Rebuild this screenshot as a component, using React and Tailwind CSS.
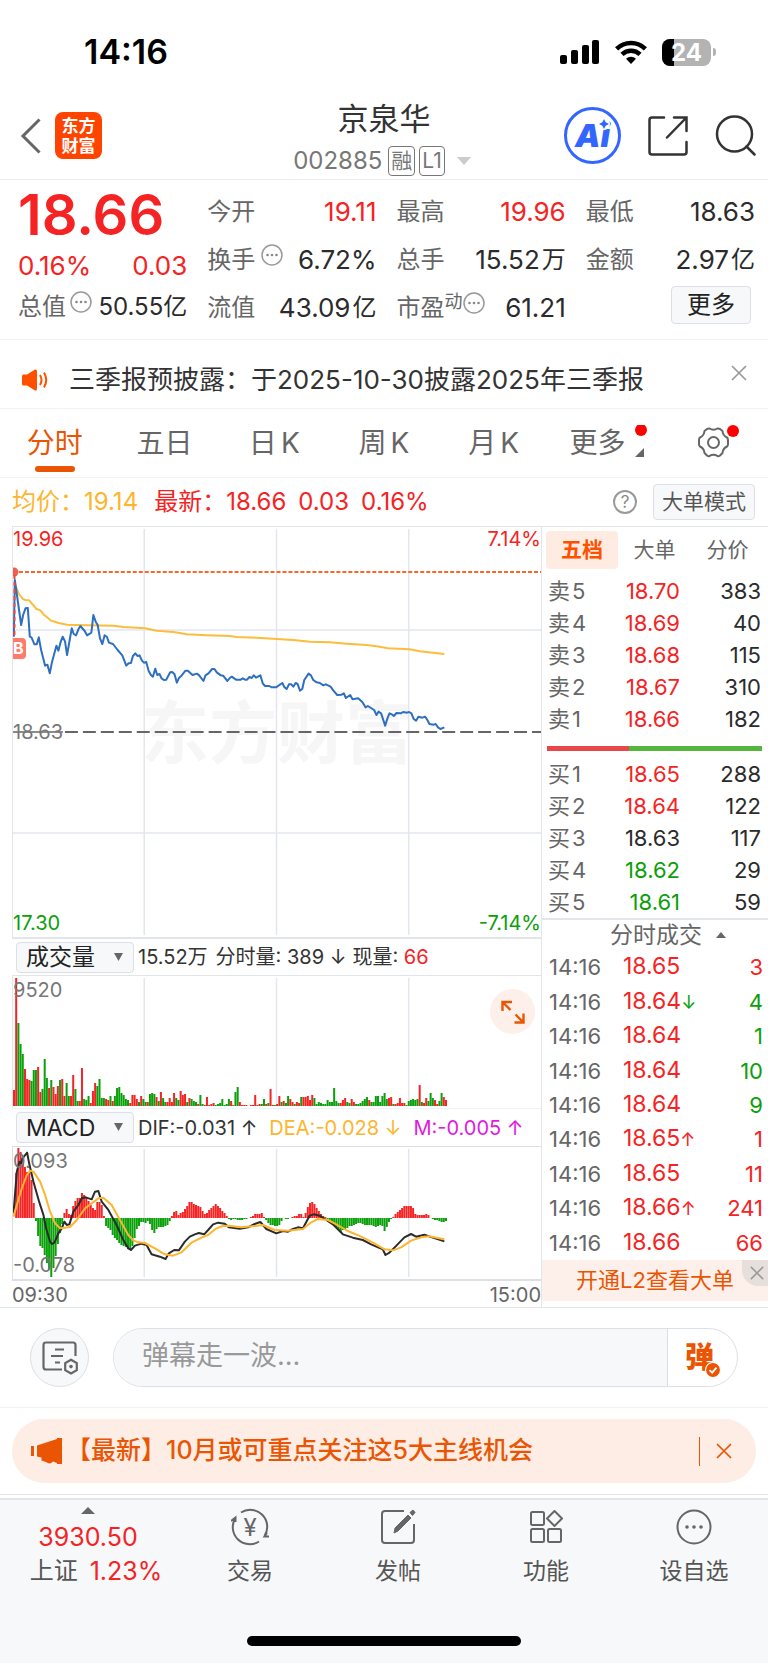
import { clsx } from "clsx";

const RED = "#f52323";
const GREEN = "#0aa00a";

const sells = [
  ["卖5", "18.70", 383, "r"],
  ["卖4", "18.69", 40, "r"],
  ["卖3", "18.68", 115, "r"],
  ["卖2", "18.67", 310, "r"],
  ["卖1", "18.66", 182, "r"],
];

const buys = [
  ["买1", "18.65", 288, "r"],
  ["买2", "18.64", 122, "r"],
  ["买3", "18.63", 117, "k"],
  ["买4", "18.62", 29, "g"],
  ["买5", "18.61", 59, "g"],
];

const ticks = [
  ["18.65", "", 3, "r"],
  ["18.64", "↓", 4, "g"],
  ["18.64", "", 1, "g"],
  ["18.64", "", 10, "g"],
  ["18.64", "", 9, "g"],
  ["18.65", "↑", 1, "r"],
  ["18.65", "", 11, "r"],
  ["18.66", "↑", 241, "r"],
  ["18.66", "", 66, "r"],
];

const textColor = { r: "text-[#f52323]", g: "text-[#0aa00a]", k: "text-[#2b2b2b]" };

// one entry per minute: r = up, g = down, then the bar height
const volume =
  "r16 r128 g83 g62 g52 r37 r27 r26 g25 g36 g36 r39 r14 g17 g47 g28 r18 g26 r19 r12 r20 g26 r27 r10 g23 g10 r10 r31 g17 g5 r5 r38 g7 g6 g10 r3 r15 r23 g20 g27 g8 g8 r7 r6 g10 r5 g10 g18 g19 g13 g11 g7 g6 r3 r11 r11 r7 g4 r10 g7 g4 r4 g12 g13 g12 r9 g5 r14 g8 g4 r4 r8 r4 r13 g8 g6 r15 r11 r12 g4 r8 g7 g5 g4 r2 g11 g2 r1 r9 r1 r2 r3 g1 g2 g3 g7 g1 g2 g7 r5 r1 g14 g19 r4 r1 r1 r1 g0 r1 r1 r11 r1 r2 g2 g7 r2 g3 r17 r1 g1 r2 r10 g4 r5 g3 g10 r7 r4 g2 r4 r3 g9 r9 r9 r10 r6 r11 g8 g2 g4 g3 g2 g2 g6 g4 g4 g18 g5 g3 r3 r6 r8 g4 g3 r7 r4 g2 g2 g3 g5 g7 g9 r6 g4 g4 g10 g10 g4 g10 g13 g7 r8 r9 g2 r2 r3 r8 r3 r3 g1 g5 g6 g7 g6 g7 r21 g4 r3 r8 g5 g13 g8 r6 r2 g5 g13 r9 r6".split(
    " "
  );

const macd = [
  0, 45, 70, 66, 58, 51, 46, 45, 38, 15, -3, -18, -28, -30, -37, -45, -52, -59, -50, -38, -26, -15, -6, 5, 9, 4, 3, 12,
  17, 20, 20, 25, 23, 20, 17, 13, 10, 8, 16, 16, 13, 2, -8, -10, -12, -17, -20, -22, -25, -27, -28, -29, -31, -32, -28,
  -20, -11, -8, -4, -4, -5, -3, -6, -12, -15, -11, -9, -9, -9, -8, -7, -3, 2, 6, 7, 3, 5, 6, 9, 12, 16, 16, 14, 13, 12,
  11, 7, 4, 5, 8, 10, 12, 14, 12, 10, 7, 5, 2, -1, -2, -1, -1, -2, -2, -2, -1, -1, 0, 1, 2, 4, 4, 4, 5, 1, -2, -5, -7,
  -7, -8, -8, -7, -3, 0, -1, -1, 0, 1, 2, 2, 4, 4, 1, 5, 11, 15, 16, 14, 10, 7, 4, 2, 1, -1, -3, -5, -8, -10, -12, -14,
  -12, -11, -10, -8, -8, -7, -6, -5, -5, -6, -7, -7, -7, -7, -8, -9, -8, -7, -8, -13, -9, -4, -1, 1, 4, 6, 8, 10, 12,
  12, 12, 12, 10, 4, 3, 3, 3, 3, 4, 3, 0, -1, -2, -2, -3, -4, -4, -3,
];

const priceLine =
  "40,350 43,180 62,315 68,285 75,265 82,264 88,350 93,352 102,373 109,373 115,352 122,390 134,437 141,434 148,460 155,425 168,377 174,392 180,368 187,350 194,365 200,405 214,325 220,342 227,346 234,328 240,318 253,333 260,346 273,338 279,285 286,305 292,315 299,355 306,372 313,346 320,351 326,368 338,372 352,390 366,406 378,437 385,430 392,429 398,408 405,400 412,408 418,406 425,422 431,428 438,426 445,452 452,465 458,470 465,446 471,465 478,462 484,475 491,480 498,479 510,457 516,456 523,463 530,488 537,473 544,467 556,452 563,452 577,465 590,461 597,466 610,483 616,466 625,460 636,447 643,447 650,457 662,466 669,467 682,483 689,474 695,470 708,479 722,479 728,475 735,479 741,479 748,471 755,474 761,466 768,473 781,466 788,490 795,498 808,498 815,502 828,502 847,489 853,501 860,507 867,493 874,493 880,500 887,489 893,492 900,512 907,507 913,480 926,461 933,466 940,480 950,487 960,489 970,496 978,493 992,500 1000,511 1012,525 1025,524 1032,520 1038,534 1051,525 1058,538 1075,535 1088,547 1097,562 1104,558 1123,570 1130,585 1136,575 1144,580 1156,617 1163,595 1169,580 1176,583 1182,588 1190,579 1203,580 1210,576 1222,578 1228,576 1235,580 1242,597 1249,602 1256,590 1268,593 1276,590 1283,600 1289,612 1302,614 1308,612 1315,622 1322,627 1334,622";

const avgLine =
  "44,195 55,222 67,237 75,240 86,241 98,255 108,267 120,271 130,284 140,292 152,302 175,309 200,314 260,316 340,317 370,321 435,325 470,332 520,336 560,343 620,346 690,348 710,351 770,353 830,357 880,360 930,365 990,367 1040,371 1100,375 1130,379 1165,385 1230,388 1260,394 1334,402";

const difLine =
  "15,715 25,590 33,560 38,565 42,550 56,533 62,565 75,620 92,680 105,720 113,760 125,800 131,807 138,803 150,775 160,760 168,740 175,750 183,748 195,710 210,690 220,670 232,667 250,673 260,650 270,648 280,680 300,705 325,750 345,795 360,820 368,825 380,812 400,806 415,810 430,838 440,841 455,845 472,852 482,835 498,825 512,826 530,800 545,785 560,778 572,774 588,778 600,765 615,748 630,743 650,746 662,757 695,761 720,757 740,747 757,741 775,762 805,775 825,768 840,770 855,762 870,757 885,760 905,722 918,718 935,722 955,735 975,748 1005,778 1035,788 1065,795 1090,808 1125,823 1133,840 1145,833 1160,818 1190,787 1210,777 1225,785 1250,779 1275,788 1310,799";

const deaLine =
  "15,725 25,690 40,640 55,600 65,587 75,590 95,620 110,660 125,710 140,745 155,760 170,758 185,756 205,735 230,700 250,685 270,670 285,668 310,690 335,735 360,780 375,796 390,802 410,804 440,820 470,838 495,842 520,832 550,803 580,788 600,780 625,760 645,753 660,752 700,757 740,753 765,750 800,765 840,767 885,762 910,742 930,732 960,735 985,748 1020,768 1060,785 1100,805 1130,823 1155,826 1180,817 1210,797 1240,787 1265,784 1290,789 1310,793";

const STEP = 2.197;

const GridLines = ({ height }) => (
  <g stroke="#e2e6ee" strokeWidth="1.5">
    <path d={`M131.500 2V${height - 2}M264 2V${height - 2}M396.500 2V${height - 2}`} />
  </g>
);

const MoreDots = () => (
  <svg className="size-[22px] shrink-0" viewBox="0 0 22 22" fill="none" stroke="#999" strokeWidth="1.5">
    <circle cx="11" cy="11" r="10" />
    <g fill="#888" stroke="none">
      <circle cx="6.5" cy="11" r="1.3" />
      <circle cx="11" cy="11" r="1.3" />
      <circle cx="15.5" cy="11" r="1.3" />
    </g>
  </svg>
);

const Cross = ({ className }) => (
  <svg className={className} viewBox="0 0 16 16" fill="none" stroke="currentColor" strokeWidth="1.7">
    <path d="M1 1L15 15M15 1L1 15" />
  </svg>
);

const StatusBar = () => (
  <div className="flex h-[92px] items-center justify-between pt-3 pr-[52px] pl-[84px]">
    <span className="text-[34px] leading-10 font-semibold text-black">14:16</span>
    <div className="flex items-center gap-[15px]">
      <svg className="h-6 w-10" viewBox="0 0 40 24">
        <rect x="0" y="15" width="7" height="9" rx="2" />
        <rect x="11" y="10" width="7" height="14" rx="2" />
        <rect x="22" y="5" width="7" height="19" rx="2" />
        <rect x="32" y="0" width="7" height="24" rx="2" />
      </svg>
      <svg className="h-6 w-8" viewBox="0 0 32 24" fill="none" stroke="#000" strokeWidth="4.5">
        <path d="M1.6 8.8A20.5 20.5 0 0 1 30.4 8.8" />
        <path d="M7 14.3A13 13 0 0 1 25 14.3" />
        <path d="M16 24L11 18.8A7.2 7.2 0 0 1 21 18.8Z" fill="#000" stroke="none" />
      </svg>
      <div className="flex items-center gap-[2px]">
        <div className="relative h-[27px] w-[49px] overflow-hidden rounded-lg bg-[#b3b3b3]">
          <div className="absolute inset-y-0 left-0 w-3 bg-black" />
          <span className="relative block text-center text-2xl leading-[27px] font-bold text-white">24</span>
        </div>
        <div className="h-2 w-[3px] rounded-r-full bg-[#b3b3b3]" />
      </div>
    </div>
  </div>
);

const Header = () => (
  <header className="relative flex h-[88px] items-center justify-between border-b border-[#ececec] pr-3 pl-5">
    <div className="flex items-center gap-[13px]">
      <button aria-label="返回">
        <svg className="h-9 w-[22px]" viewBox="0 0 22 36" fill="none" stroke="#666" strokeWidth="3">
          <path d="M19.500 1.500L3 18L19.500 34.500" />
        </svg>
      </button>
      <a
        href="#home"
        className="flex size-[47px] flex-col items-center justify-center rounded-lg bg-[#ff4400] text-[17px] leading-5 font-bold text-white"
      >
        <span>东方</span>
        <span>财富</span>
      </a>
    </div>

    <div className="absolute inset-x-0 top-[9px] mx-auto flex w-[200px] flex-col items-center gap-[9px]">
      <h1 className="text-[31px] leading-9 text-[#333]">京泉华</h1>
      <div className="flex items-center pr-1 text-[#777]">
        <span className="text-2xl leading-[30px]">002885</span>
        <span className="ml-[6px] rounded border border-[#777] px-[2px] text-[21px] leading-7">融</span>
        <span className="ml-1 rounded border border-[#777] px-[2px] text-[21px] leading-7">L1</span>
        <svg className="ml-3 h-2 w-[14px]" viewBox="0 0 14 8" fill="#ccc">
          <path d="M0 0H14L7 8Z" />
        </svg>
      </div>
    </div>

    <div className="flex items-center gap-[27px]">
      <button
        aria-label="Ai"
        className="relative flex size-[57px] items-center justify-center rounded-full border-[3px] border-[#3366ff] text-[32px] font-black text-[#3366ff] italic"
      >
        Ai
        <svg className="absolute top-2 right-2 size-3" viewBox="0 0 12 12">
          <circle cx="6" cy="6" r="6" fill="#fff" />
          <path d="M6 1L7.700 4.300L11 6L7.700 7.700L6 11L4.300 7.700L1 6L4.300 4.300Z" fill="#3366ff" />
        </svg>
      </button>
      <button aria-label="分享">
        <svg className="size-10" viewBox="0 0 40 40" fill="none" stroke="#333" strokeWidth="2.5" strokeLinecap="round">
          <path d="M16 1.500H4Q1.500 1.500 1.500 4V36Q1.500 38.500 4 38.500H36Q38.500 38.500 38.500 36V26" />
          <path d="M26 1.500H38.500V15M38 2L19 21.500" />
        </svg>
      </button>
      <button aria-label="搜索">
        <svg className="size-[41px]" viewBox="0 0 41 41" fill="none" stroke="#333" strokeWidth="2.5" strokeLinecap="round">
          <circle cx="19.500" cy="19" r="17.500" />
          <path d="M31.500 31.500L39.500 39.500" />
        </svg>
      </button>
    </div>
  </header>
);

const Quote = ({ label, value, unit, red, children }) => (
  <div className="flex h-12 items-center justify-between">
    <dt className="flex whitespace-nowrap text-[#666]">
      {label}
      {children}
    </dt>
    <dd className={clsx("flex items-center whitespace-nowrap", red ? "text-[#f52323]" : "text-[#2b2b2b]")}>
      <span className="text-[26px]">{value}</span>
      {unit && <span className="ml-[2px]">{unit}</span>}
    </dd>
  </div>
);

const Quotes = () => (
  <section className="grid h-40 grid-cols-4 gap-x-5 border-b border-[#f2f2f2] pt-2 pr-[13px] pl-[18px] text-2xl leading-8">
    <div>
      <div className="h-[54px] text-[56px] leading-[54px] font-semibold text-[#f52323]">18.66</div>
      <div className="flex h-12 items-center justify-between text-[26px] text-[#f52323]">
        <span>0.16%</span>
        <span>0.03</span>
      </div>
      <dl className="flex items-center justify-between pt-px">
        <dt className="flex gap-1 text-[#666]">
          总值
          <MoreDots />
        </dt>
        <dd className="whitespace-nowrap text-[#2b2b2b]">50.55亿</dd>
      </dl>
    </div>
    <dl>
      <Quote label="今开" value="19.11" red />
      <Quote label="换手" value="6.72%">
        <span className="ml-[6px]">
          <MoreDots />
        </span>
      </Quote>
      <Quote label="流值" value="43.09" unit="亿" />
    </dl>
    <dl>
      <Quote label="最高" value="19.96" red />
      <Quote label="总手" value="15.52" unit="万" />
      <Quote label="市盈" value="61.21">
        <span className="text-[18px] leading-5">动</span>
        <MoreDots />
      </Quote>
    </dl>
    <div>
      <dl>
        <Quote label="最低" value="18.63" />
        <Quote label="金额" value="2.97" unit="亿" />
      </dl>
      <div className="flex h-12 items-start justify-end pt-[2px] pr-1">
        <button className="h-[38px] rounded border border-[#dcdfe6] bg-[#f7f8fa] px-[15px] text-[#222]">更多</button>
      </div>
    </div>
  </section>
);

const Notice = () => (
  <section className="flex h-[69px] items-center border-b border-[#f2f2f2] pt-3 pr-[21px] pl-[22px]">
    <svg className="h-[22px] w-[26px]" viewBox="0 0 26 22" fill="#ff5000">
      <path d="M0 7Q0 5.500 1.500 5.500H5L13 .5Q15 0 15 2V20Q15 22 13 21.500L5 16.500H1.500Q0 16.500 0 15Z" />
      <path d="M18 6Q21 11 18 16M22 3.500Q26.500 11 22 18.500" fill="none" stroke="#ff5000" strokeWidth="2" />
    </svg>
    <p className="ml-[21px] flex-1 text-[26px] leading-9 whitespace-nowrap text-[#333]">
      三季报预披露：于2025-10-30披露2025年三季报
    </p>
    <button aria-label="关闭" className="pb-[14px] text-[#999]">
      <Cross className="size-4" />
    </button>
  </section>
);

const ChartTabs = () => (
  <nav className="grid h-[69px] grid-cols-7 items-start border-b border-[#f2f2f2] text-[28px] leading-9 text-[#666] *:pt-4">
    <button className="flex flex-col items-center text-[#ea5504]">
      分时
      <span className="mt-[5px] h-[6px] w-10 rounded-full bg-[#ea5504]" />
    </button>
    <button>五日</button>
    <button>
      日<span className="ml-1">K</span>
    </button>
    <button>
      周<span className="ml-1">K</span>
    </button>
    <button>
      月<span className="ml-1">K</span>
    </button>
    <button className="flex justify-center pl-3">
      更多
      <svg className="ml-2 h-9 w-4" viewBox="0 0 16 36">
        <circle cx="8" cy="5" r="6" fill="#f00" />
        <path d="M11 23V32H2Z" fill="#666" />
      </svg>
    </button>
    <button aria-label="设置" className="flex justify-center pl-3">
      <svg className="h-9 w-[44px]" viewBox="0 0 44 36" fill="none" stroke="#666" strokeWidth="2">
        <path
          strokeLinejoin="round"
          d="M12.500 3.500Q16.500 6 20.500 3.500Q21.500 3.200 23 4L25.500 6Q25.800 10.500 30 12.500Q31 13 31 15.500V19Q31 21 30 21.500Q25.800 23.500 25.500 28L23 30.500Q21.500 31.500 20.500 31Q16.500 28.500 12.500 31Q11.500 31.500 10 30.500L7.500 28Q7.200 23.500 3 21.500Q2 21 2 19V15.500Q2 13 3 12.500Q7.200 10.500 7.500 6L10 4Q11.500 3.200 12.500 3.500Z"
        />
        <circle cx="16.500" cy="17.500" r="5.500" />
        <circle cx="36" cy="6" r="6" fill="#f00" stroke="none" />
      </svg>
    </button>
  </nav>
);

const InfoLine = () => (
  <section className="flex h-12 items-center pr-[13px] pl-3 text-2xl whitespace-nowrap text-[#f52323]">
    <span className="text-[#fdb52d]">均价：19.14</span>
    <span className="ml-4">最新：18.66</span>
    <span className="ml-3">0.03</span>
    <span className="ml-3">0.16%</span>
    <button aria-label="帮助" className="mr-4 ml-auto size-6 rounded-full border-2 border-[#999] text-[17px] leading-5 text-[#888]">
      ?
    </button>
    <button className="h-9 rounded border border-[#dcdfe6] bg-[#f7f8fa] px-2 text-[21px] text-[#555]">大单模式</button>
  </section>
);

const PriceChart = () => (
  <div className="relative overflow-hidden border-t border-l border-[#e2e5ea] text-xl leading-6">
    <span className="absolute top-[161px] left-[128px] text-[68px] leading-[90px] font-bold whitespace-nowrap text-[#f6f6f6]">
      东方财富
    </span>
    <svg className="relative block h-[410px] w-full" viewBox="0 0 529 410" preserveAspectRatio="none" fill="none">
      <GridLines height={410} />
      <path d="M0 103H529M0 306H529" stroke="#e2e6ee" strokeWidth="1.5" />
      <path d="M0 45H529" stroke="#f2692a" strokeWidth="2" strokeDasharray="4 2" />
      <circle cx="1" cy="45" r="4.500" fill="#f0604f" />
      <path d="M52 205H529" stroke="#666" strokeWidth="2" strokeDasharray="13 5" />
      <path d="M0 205H50" stroke="#666" strokeWidth="1.500" />
      <g transform="translate(-12.500 -7) scale(.33333)" strokeWidth="6" strokeLinejoin="round">
        <polyline points={avgLine} stroke="#fdbd3c" />
        <polyline points={priceLine} stroke="#2d6fc1" />
      </g>
      <path d="M1.500 48V115" stroke="#f04a3c" strokeWidth="2" strokeDasharray="4 3" />
    </svg>
    <span className="absolute top-[111px] left-0 h-[21px] w-[13px] rounded-r bg-[#ff7a6a] text-base leading-5 font-bold text-white">
      B
    </span>
    <span className="absolute top-0 left-0 text-[#f52323]">19.96</span>
    <span className="absolute top-0 right-0 text-[#f52323]">7.14%</span>
    <span className="absolute top-[193px] left-0 text-[#777]">18.63</span>
    <span className="absolute bottom-[2px] left-0 text-[#0aa00a]">17.30</span>
    <span className="absolute right-0 bottom-[2px] text-[#0aa00a]">-7.14%</span>
  </div>
);

const IndicatorSelect = ({ label, value }) => (
  <div className="relative ml-1 h-[31px] w-[118px] shrink-0">
    <select
      aria-label={label}
      defaultValue={value}
      className="h-full w-full appearance-none rounded border border-[#dcdfe6] bg-[#f7f8fa] pl-[9px] text-[23px] leading-7 text-[#222]"
    >
      <option>{value}</option>
    </select>
    <svg className="pointer-events-none absolute top-[11px] right-[11px] h-2 w-[9px]" viewBox="0 0 9 8" fill="#666">
      <path d="M0 0H9L4.500 8Z" />
    </svg>
  </div>
);

const VolumeChart = () => (
  <div className="relative border-t border-l border-[#e2e5ea]">
    <svg className="block h-[132px] w-full" viewBox="0 0 529 132" preserveAspectRatio="none">
      <GridLines height={132} />
      {volume.map((v, i) => {
        const h = Number(v.slice(1));
        return (
          <rect key={i} x={i * STEP} y={130 - h} width="2" height={h} fill={v[0] === "r" ? RED : GREEN} />
        );
      })}
    </svg>
    <span className="absolute top-[2px] left-0 text-xl leading-6 text-[#777]">9520</span>
    <button
      aria-label="展开"
      className="absolute top-[13px] right-[6px] flex size-[45px] items-center justify-center rounded-full bg-[#fdf0ea]"
    >
      <svg className="size-6" viewBox="0 0 24 24" fill="none" stroke="#ea5504" strokeWidth="2.4">
        <path d="M1.500 11V2H11M2 2.500L9.500 10M22.500 13.500V22.500H13.500M22 22L14.500 14.500" />
      </svg>
    </button>
  </div>
);

const MacdChart = () => (
  <div className="relative border-t border-l border-[#dcdfe6] text-xl leading-6 text-[#777]">
    <svg className="block h-[132px] w-full" viewBox="0 0 529 132" preserveAspectRatio="none" fill="none">
      <GridLines height={132} />
      {macd.map((v, i) => (
        <rect
          key={i}
          x={i * STEP}
          y={v > 0 ? 71 - v : 71}
          width="2"
          height={Math.abs(v)}
          fill={v > 0 ? RED : GREEN}
        />
      ))}
      <g transform="translate(-4.500 -172) scale(.33333)" strokeWidth="6" strokeLinejoin="round">
        <polyline points={difLine} stroke="#2b2b2b" />
        <polyline points={deaLine} stroke="#fdb52d" />
      </g>
    </svg>
    <span className="absolute top-[2px] left-0">0.093</span>
    <span className="absolute bottom-[2px] left-0">-0.078</span>
  </div>
);

const Charts = () => (
  <div className="ml-3 min-w-0 flex-1">
    <PriceChart />
    <div className="flex h-[38px] items-center border-t-2 border-[#e2e5ea] text-xl leading-7 whitespace-nowrap text-[#333]">
      <IndicatorSelect label="成交指标" value="成交量" />
      <span className="ml-1">15.52万</span>
      <span className="ml-2">分时量: 389 ↓</span>
      <span className="ml-[6px]">
        现量: <span className="text-[#f52323]">66</span>
      </span>
    </div>
    <VolumeChart />
    <div className="flex h-[38px] items-center border-t border-[#f0f1f3] text-xl leading-7 whitespace-nowrap text-[#333]">
      <IndicatorSelect label="技术指标" value="MACD" />
      <span className="ml-1">DIF:-0.031 ↑</span>
      <span className="ml-3 text-[#fdb52d]">DEA:-0.028 ↓</span>
      <span className="ml-3 text-[#e01ae0]">M:-0.005 ↑</span>
    </div>
    <MacdChart />
    <div className="flex h-7 items-center justify-between border-t-2 border-[#dcdfe6] pt-[2px] text-xl leading-6 text-[#666]">
      <span>09:30</span>
      <span>15:00</span>
    </div>
  </div>
);

const DepthTable = ({ rows }) => (
  <table className="w-full text-[22px] leading-8">
    <tbody>
      {rows.map(([name, price, qty, tone]) => (
        <tr key={name} className="h-8">
          <th className="w-[52px] p-0 pl-[6px] text-left font-normal whitespace-nowrap text-[#666]">
            {name[0]}
            <span className="ml-[2px]">{name[1]}</span>
          </th>
          <td className={clsx("p-0 text-right", textColor[tone])}>{price}</td>
          <td className="w-[88px] p-0 pr-[7px] text-right text-[#2b2b2b]">{qty}</td>
        </tr>
      ))}
    </tbody>
  </table>
);

const OrderBook = () => (
  <aside className="w-[227px] shrink-0 border-t border-l border-[#e2e5ea]">
    <div className="mt-1 flex h-[38px] items-center pl-1 text-[21px] text-[#666]">
      <button className="h-full w-[72px] rounded bg-[#feece3] font-bold text-[#ff5000]">五档</button>
      <button className="h-full w-[73px]">大单</button>
      <button className="h-full w-[73px]">分价</button>
    </div>
    <div className="pt-[6px]">
      <DepthTable rows={sells} />
    </div>
    <div className="mt-[11px] mr-[6px] mb-[7px] ml-[5px] flex h-[5px]">
      <div className="w-[38%] bg-[#e8474a]" />
      <div className="flex-1 bg-[#56b53c]" />
    </div>
    <DepthTable rows={buys} />
    <button className="flex h-8 w-full items-center justify-center gap-[14px] border-t-2 border-[#e2e5ea] pl-[26px] text-[23px] text-[#666]">
      分时成交
      <svg className="h-[6px] w-[10px]" viewBox="0 0 10 6" fill="#666">
        <path d="M0 6H10L5 0Z" />
      </svg>
    </button>
    <table className="h-[310px] w-full text-[23px] leading-7">
      <tbody>
        {ticks.map(([price, arrow, qty, tone], i) => (
          <tr key={i}>
            <td className="w-[81px] p-0 pl-[7px] text-[22px] text-[#666]">14:16</td>
            <td className="p-0 whitespace-nowrap text-[#f52323]">
              {price}
              <span className={clsx("text-lg", textColor[tone])}>{arrow}</span>
            </td>
            <td className={clsx("w-12 p-0 pr-[5px] text-right text-[22px]", textColor[tone])}>{qty}</td>
          </tr>
        ))}
      </tbody>
    </table>
    <div className="relative flex h-[41px] items-center justify-center overflow-hidden bg-[#fdf0ea] text-[22px]">
      <a href="#l2" className="text-[#ea5504]">
        开通L2查看大单
      </a>
      <button
        aria-label="关闭"
        className="absolute top-0 right-0 flex h-[26px] w-[26px] items-center justify-center rounded-bl-2xl bg-[#e6dfdc] pl-1 text-[#999]"
      >
        <Cross className="size-[14px]" />
      </button>
    </div>
  </aside>
);

const CommentBar = () => (
  <section className="flex h-[100px] items-center gap-6 border-b border-[#f2f2f2] pr-[30px] pl-[30px]">
    <button
      aria-label="弹幕设置"
      className="flex size-[59px] shrink-0 items-center justify-center rounded-full border border-[#dcdfe6] bg-[#f7f8fa]"
    >
      <svg className="h-[34px] w-9" viewBox="0 0 36 34" fill="none" stroke="#666" strokeWidth="2.200">
        <path d="M20 28.500H4Q1.500 28.500 1.500 26V4Q1.500 1.500 4 1.500H31Q33.500 1.500 33.500 4V15" />
        <path d="M13 8.500H22M9 15H21M13 21.500H18" />
        <path d="M29 18.800L34.800 22.100V29.100L29 32.500L23.200 29.100V22.100Z" />
        <circle cx="29" cy="25.600" r="1.800" fill="#666" stroke="none" />
      </svg>
    </button>
    <div className="flex h-[59px] flex-1 overflow-hidden rounded-full border border-[#dcdfe6]">
      <input
        type="text"
        aria-label="弹幕"
        placeholder="弹幕走一波..."
        className="min-w-0 flex-1 bg-[#f7f8fa] pb-[2px] pl-7 text-[27px] outline-none placeholder:text-[#999]"
      />
      <button className="relative w-[70px] border-l border-[#dcdfe6] pr-[6px] text-[29px] leading-[52px] font-black text-[#ea5504]">
        弹
        <svg className="absolute top-[33px] right-[16px] size-[16px]" viewBox="0 0 15 15" fill="none">
          <circle cx="7.500" cy="7.500" r="7" fill="#ea5504" stroke="#fff" />
          <path d="M4.200 7.600L6.700 10L10.800 5.300" stroke="#fff" strokeWidth="1.700" />
        </svg>
      </button>
    </div>
  </section>
);

const Promo = () => (
  <section className="border-b border-[#e2e5ea] px-3 pt-[11px] pb-[11px] text-[#ea5504]">
    <div className="flex h-16 items-center rounded-full bg-[#feede4] pr-6 pl-[19px]">
      <svg className="h-[26px] w-[31px]" viewBox="0 0 31 26" fill="#ea5504">
        <path d="M0 8H3V18H0ZM6 7.500L26 1V0H31V26H26V25L22 23.500Q19 27 15 24L10.500 22.500V19.500L6 18.500Z" />
      </svg>
      <a href="#news" className="ml-1 flex-1 text-[25px] font-medium whitespace-nowrap">
        【最新】10月或可重点关注这5大主线机会
      </a>
      <span className="mr-4 h-[29px] w-px bg-[#ea5504]" />
      <button aria-label="关闭">
        <Cross className="size-4" />
      </button>
    </div>
  </section>
);

const NavItem = ({ label, children }) => (
  <a href="#nav" className="flex flex-1 flex-col items-center gap-[9px] pt-2">
    <svg className="size-[38px]" viewBox="0 0 38 38" fill="none" stroke="#666" strokeWidth="2">
      {children}
    </svg>
    <span>{label}</span>
  </a>
);

const BottomNav = () => (
  <footer className="mt-[3px] border-t-2 border-[#e2e5ea] bg-[#f7f8fa]">
    <nav className="flex text-[23px] leading-8 whitespace-nowrap text-[#555]">
      <a href="#index" className="flex w-[176px] flex-col items-center pt-[7px] text-2xl leading-[34px]">
        <svg className="mb-[6px] h-[7px] w-[14px]" viewBox="0 0 14 7" fill="#666">
          <path d="M0 7H14L7 0Z" />
        </svg>
        <span className="text-[25px] text-[#f52323]">3930.50</span>
        <span className="flex gap-3 pl-4">
          上证<span className="text-[25px] text-[#f52323]">1.23%</span>
        </span>
      </a>
      <NavItem label="交易">
        <path d="M10 4.500A17 17 0 0 1 33.500 28M36 25L33.500 28.500H38" />
        <path d="M28 33.500A17 17 0 0 1 4.500 10M0 13L4.500 9.500V14" />
        <text x="19" y="27.500" textAnchor="middle" fontSize="24" fill="#666" stroke="none">
          ¥
        </text>
      </NavItem>
      <NavItem label="发帖">
        <path d="M25 3H6Q3 3 3 6V32Q3 35 6 35H32Q35 35 35 32V16" />
        <path d="M15 25L16 20L29 7L32 10L19 23Z M31 4.500L34 2L36 4.500L33.500 7.500Z" fill="#666" strokeWidth="1" />
      </NavItem>
      <NavItem label="功能">
        <rect x="4" y="4" width="13" height="13" rx="1.500" />
        <rect x="4" y="21" width="13" height="13" rx="1.500" />
        <rect x="21" y="21" width="13" height="13" rx="1.500" />
        <path d="M27.500 3L35 10.500L27.500 18L20 10.500Z" strokeLinejoin="round" />
      </NavItem>
      <NavItem label="设自选">
        <circle cx="19" cy="19" r="16.500" />
        <g fill="#666" stroke="none">
          <circle cx="12" cy="19" r="1.800" />
          <circle cx="19" cy="19" r="1.800" />
          <circle cx="26" cy="19" r="1.800" />
        </g>
      </NavItem>
    </nav>
    <div className="flex justify-center pt-12 pb-[17px]">
      <div className="h-[10px] w-[274px] rounded-full bg-black" />
    </div>
  </footer>
);

const App = () => {
  return (
    <div className="bg-white font-[Inter,'Noto_Sans_CJK_SC',sans-serif]">
      <StatusBar />
      <Header />
      <Quotes />
      <Notice />
      <ChartTabs />
      <InfoLine />
      <main className="flex border-b border-[#e2e5ea]">
        <Charts />
        <OrderBook />
      </main>
      <CommentBar />
      <Promo />
      <BottomNav />
    </div>
  );
};

export default App;
